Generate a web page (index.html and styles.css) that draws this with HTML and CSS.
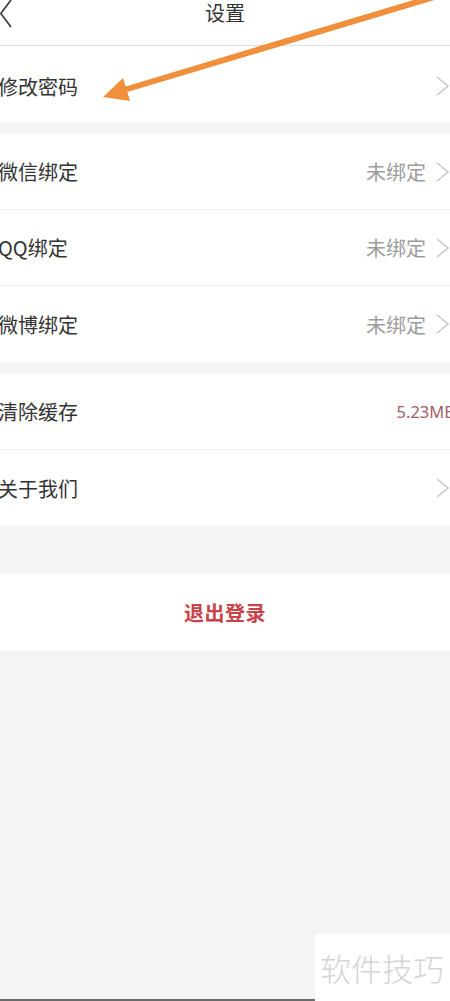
FILE: index.html
```html
<!DOCTYPE html>
<html lang="zh-CN">
<head>
<meta charset="utf-8">
<title>设置</title>
<link rel="stylesheet" href="styles.css">
</head>
<body>
<div class="page">
  <header class="topbar">
    <svg class="back" width="14" height="28" viewBox="0 0 14 28"><polyline points="11,0 0.8,13.5 11,27" fill="none" stroke="#333" stroke-width="1.6"/></svg>
    <h1 class="title">设置</h1>
  </header>

  <section class="group">
    <div class="row row-first"><span class="label">修改密码</span><span class="right"><svg class="chev" width="13" height="20" viewBox="0 0 13 20"><polyline points="1,1 12,10 1,19" fill="none" stroke="#c9c9c9" stroke-width="1.6"/></svg></span></div>
  </section>

  <section class="group">
    <div class="row"><span class="label">微信绑定</span><span class="right"><span class="value">未绑定</span><svg class="chev" width="13" height="20" viewBox="0 0 13 20"><polyline points="1,1 12,10 1,19" fill="none" stroke="#c9c9c9" stroke-width="1.6"/></svg></span></div>
    <div class="row"><span class="label">QQ绑定</span><span class="right"><span class="value">未绑定</span><svg class="chev" width="13" height="20" viewBox="0 0 13 20"><polyline points="1,1 12,10 1,19" fill="none" stroke="#c9c9c9" stroke-width="1.6"/></svg></span></div>
    <div class="row"><span class="label">微博绑定</span><span class="right"><span class="value">未绑定</span><svg class="chev" width="13" height="20" viewBox="0 0 13 20"><polyline points="1,1 12,10 1,19" fill="none" stroke="#c9c9c9" stroke-width="1.6"/></svg></span></div>
  </section>

  <section class="group">
    <div class="row"><span class="label">清除缓存</span><span class="right"><span class="cache">5.23MB</span></span></div>
    <div class="row"><span class="label">关于我们</span><span class="right"><svg class="chev" width="13" height="20" viewBox="0 0 13 20"><polyline points="1,1 12,10 1,19" fill="none" stroke="#c9c9c9" stroke-width="1.6"/></svg></span></div>
  </section>

  <section class="group group-logout">
    <div class="logout">退出登录</div>
  </section>

  <div class="filler"></div>
</div>

<svg class="arrow" width="450" height="130" viewBox="0 0 450 130">
  <line x1="434" y1="-3" x2="124" y2="90" stroke="#f0903c" stroke-width="6" stroke-linecap="round"/>
  <polygon points="103,97 130,101 123,78" fill="#f0903c"/>
</svg>

<div class="watermark">软件技巧</div>
</body>
</html>
```

FILE: styles.css
```css
html, body {
  margin: 0;
  padding: 0;
}
body {
  width: 450px;
  height: 1001px;
  overflow: hidden;
  position: relative;
  background: #f4f4f4;
  font-family: "Noto Sans CJK SC", "Noto Sans", sans-serif;
  color: #333;
}
.page {
  display: flex;
  flex-direction: column;
  height: 1001px;
}
.topbar {
  height: 45px;
  background: #fff;
  border-bottom: 1px solid #e2e2e2;
  display: flex;
  justify-content: center;
  align-items: flex-start;
  position: relative;
}
.back {
  position: absolute;
  left: 0;
  top: 0;
}
.title {
  margin: 0;
  padding-top: 1px;
  font-size: 20px;
  font-weight: 400;
  line-height: 24px;
  color: #333;
}
.group {
  background: #fff;
  margin-bottom: 12px;
  display: flex;
  flex-direction: column;
}
.row {
  height: 75px;
  display: flex;
  align-items: center;
  justify-content: space-between;
  border-bottom: 1px solid #f0f0f0;
}
.row:last-child {
  border-bottom: none;
  height: 76px;
}
.row.row-first {
  padding-top: 4px;
  height: 72px;
}
.label {
  font-size: 20px;
  margin-left: -2px;
  color: #333;
}
.right {
  display: flex;
  align-items: center;
}
.value {
  font-size: 20px;
  color: #9c9c9c;
  margin-right: 10px;
}
.chev {
  display: block;
  margin-right: 1px;
}
.cache {
  font-family: "Noto Sans", sans-serif;
  font-size: 16.5px;
  color: #a2606a;
  margin-right: -5px;
}
.group:nth-of-type(3) {
  margin-bottom: 48px;
}
.group-logout {
  margin-bottom: 0;
}
.logout {
  height: 77px;
  display: flex;
  align-items: center;
  justify-content: center;
  font-size: 20px;
  font-weight: 600;
  color: #c8434a;
  letter-spacing: 0.5px;
}
.filler {
  flex: 1;
  border-bottom: 2px solid #6a6a6a;
}
.arrow {
  position: absolute;
  left: 0;
  top: 0;
  pointer-events: none;
}
.watermark {
  position: absolute;
  left: 315px;
  top: 934px;
  width: 135px;
  height: 67px;
  background: #fff;
  font-size: 31px;
  font-weight: 300;
  color: #d4d4d4;
  line-height: 67px;
  padding-left: 5px;
  box-sizing: border-box;
  white-space: nowrap;
}
```
